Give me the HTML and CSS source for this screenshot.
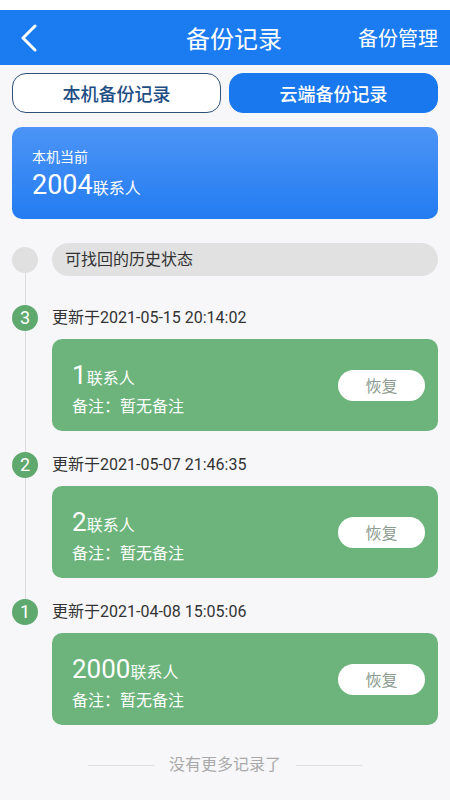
FILE: index.html
```html
<!DOCTYPE html>
<html lang="zh-CN">
<head>
<meta charset="UTF-8">
<meta name="viewport" content="width=device-width, initial-scale=1.0">
<title>备份记录</title>
<link rel="stylesheet" href="styles.css">
</head>
<body>

<div class="status-bar"></div>

<header class="top-bar">
  <a class="back" href="#">
    <svg width="18" height="28" viewBox="0 0 18 28"><path d="M15 2 L3 14 L15 26" fill="none" stroke="#fff" stroke-width="3" stroke-linecap="round" stroke-linejoin="round"/></svg>
  </a>
  <h1 class="title">备份记录</h1>
  <a class="manage" href="#">备份管理</a>
</header>

<nav class="tabs">
  <a class="tab" href="#">本机备份记录</a>
  <a class="tab active" href="#">云端备份记录</a>
</nav>

<section class="current">
  <div class="current-label">本机当前</div>
  <div class="current-count"><span class="num">2004</span>联系人</div>
</section>

<section class="timeline">
  <div class="entry head">
    <div class="rail"><span class="dot gray"></span><span class="line"></span></div>
    <div class="main"><div class="pill">可找回的历史状态</div></div>
  </div>

  <div class="entry">
    <div class="rail"><span class="dot">3</span><span class="line"></span></div>
    <div class="main">
      <div class="when">更新于2021-05-15 20:14:02</div>
      <div class="record">
        <div class="info">
          <div class="count"><span class="num">1</span>联系人</div>
          <div class="note">备注：暂无备注</div>
        </div>
        <button class="restore">恢复</button>
      </div>
    </div>
  </div>

  <div class="entry">
    <div class="rail"><span class="dot">2</span><span class="line"></span></div>
    <div class="main">
      <div class="when">更新于2021-05-07 21:46:35</div>
      <div class="record">
        <div class="info">
          <div class="count"><span class="num">2</span>联系人</div>
          <div class="note">备注：暂无备注</div>
        </div>
        <button class="restore">恢复</button>
      </div>
    </div>
  </div>

  <div class="entry last">
    <div class="rail"><span class="dot">1</span></div>
    <div class="main">
      <div class="when">更新于2021-04-08 15:05:06</div>
      <div class="record">
        <div class="info">
          <div class="count"><span class="num">2000</span>联系人</div>
          <div class="note">备注：暂无备注</div>
        </div>
        <button class="restore">恢复</button>
      </div>
    </div>
  </div>
</section>

<div class="end">
  <span class="end-line"></span>
  <span>没有更多记录了</span>
  <span class="end-line"></span>
</div>

</body>
</html>
```

FILE: styles.css
```css
body {
  margin: 0;
  padding: 0;
  background: #f7f7f9;
  color: #333;
  font-family: Roboto, 'Noto Sans CJK SC', sans-serif;
  width: 450px;
  overflow: hidden;
}

a {
  text-decoration: none;
}

.status-bar {
  height: 10px;
  background: #fff;
}

.top-bar {
  height: 55px;
  background: #1b7bf1;
  display: flex;
  align-items: center;
  padding: 0 12px 0 20px;
  color: #fff;
}

.back {
  display: flex;
  width: 60px;
}

.title {
  flex: 1;
  margin: 0;
  text-align: center;
  font-size: 24px;
  font-weight: normal;
  padding-left: 30px;
}

.manage {
  color: #fff;
  font-size: 20px;
}

.tabs {
  display: flex;
  gap: 8px;
  padding: 0 12px;
  margin-top: 8px;
}

.tab {
  flex: 1;
  height: 40px;
  box-sizing: border-box;
  border: 1.5px solid #2f5178;
  border-radius: 14px;
  background: #fff;
  color: #1e4d84;
  font-size: 18px;
  font-weight: 500;
  display: flex;
  align-items: center;
  justify-content: center;
}

.tab.active {
  background: #1a78ee;
  border-color: #1a78ee;
  color: #fff;
}

.current {
  margin: 14px 12px 0;
  height: 92px;
  box-sizing: border-box;
  padding: 19px 20px 0;
  border-radius: 10px;
  background: linear-gradient(#4c94f6, #237cf1);
  color: #fff;
}

.current-label {
  font-size: 14px;
  line-height: 22px;
}

.current-count {
  font-size: 16px;
  line-height: 34px;
}

.current-count .num {
  font-size: 27px;
}

.timeline {
  padding: 0 12px;
  margin-top: 24px;
}

.entry {
  display: grid;
  grid-template-columns: 26px 1fr;
  column-gap: 14px;
}

.rail {
  display: flex;
  flex-direction: column;
  align-items: center;
}

.dot {
  width: 26px;
  height: 26px;
  border-radius: 50%;
  background: #5fa96f;
  color: #fff;
  font-size: 18px;
  line-height: 26px;
  text-align: center;
  flex-shrink: 0;
}

.dot.gray {
  background: #e0e0e0;
  margin-top: 4px;
}

.line {
  flex: 1;
  width: 1px;
  background: #dcdcdc;
}

.pill {
  height: 33px;
  line-height: 33px;
  border-radius: 17px;
  background: #e1e1e1;
  padding-left: 13px;
  font-size: 16px;
  margin-bottom: 29px;
}

.main {
  padding-bottom: 21px;
}

.head .main,
.last .main {
  padding-bottom: 0;
}

.when {
  height: 26px;
  line-height: 26px;
  font-size: 16px;
}

.record {
  margin-top: 8px;
  height: 92px;
  border-radius: 10px;
  background: #6cb47b;
  color: #fff;
  display: flex;
  align-items: center;
  justify-content: space-between;
  padding: 0 13px 0 20px;
}

.info {
  align-self: flex-start;
  padding-top: 20px;
}

.count {
  font-size: 16px;
  line-height: 32px;
}

.count .num {
  font-size: 26px;
}

.note {
  font-size: 16px;
  line-height: 24px;
}

.restore {
  width: 87px;
  height: 31px;
  border: none;
  border-radius: 16px;
  background: #fff;
  color: #8b9b8f;
  font-family: inherit;
  font-size: 16px;
  padding: 0;
}

.end {
  display: flex;
  align-items: center;
  justify-content: center;
  gap: 15px;
  margin-top: 28px;
  line-height: 24px;
  font-size: 16px;
  color: #a9a9a9;
}

.end-line {
  width: 66px;
  height: 1px;
  background: #dedede;
}
```
